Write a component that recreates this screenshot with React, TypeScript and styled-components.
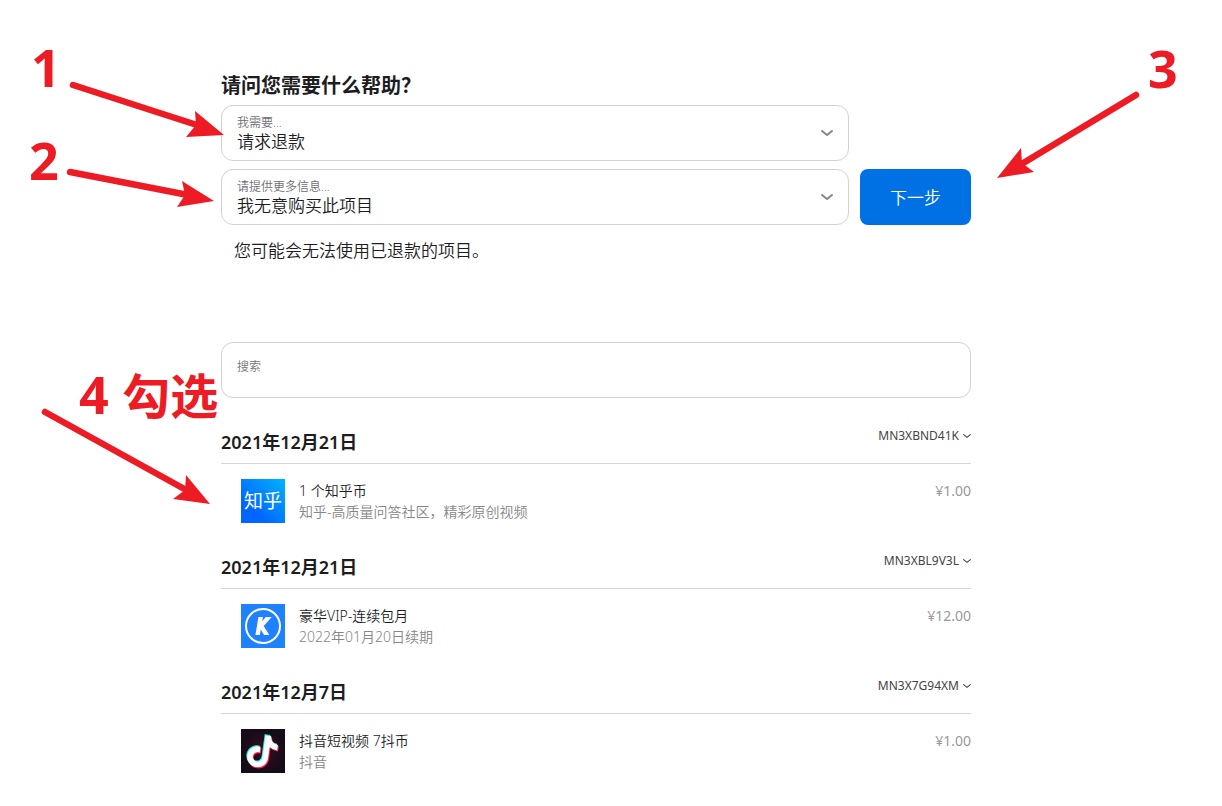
import React from "react";
import styled, { createGlobalStyle } from "styled-components";
import { FaTiktok } from "react-icons/fa6";

const GlobalStyle = createGlobalStyle`
  * { box-sizing: border-box; }
  body {
    margin: 0;
    background: #fff;
    color: #1d1d1f;
    font-family: "Noto Sans", "Noto Sans CJK SC", sans-serif;
    font-weight: 350;
    overflow-x: hidden;
  }
  button, input, select { font: inherit; color: inherit; }
`;

const Page = styled.main`
  padding-right: 30px;
`;

const Content = styled.div`
  position: relative;
  max-width: 750px;
  margin: 0 auto;
  padding-top: 74px;
`;

const Title = styled.h1`
  margin: 0 0 7px;
  font-size: 20px;
  line-height: 24px;
  font-weight: 700;
`;

const RequestForm = styled.form`
  display: grid;
  grid-template-columns: 1fr 111px;
  gap: 8px 11px;
`;

const Field = styled.div`
  display: grid;
  grid-column: 1;
  align-items: start;
  > * { grid-area: 1 / 1; }
`;

const FieldLabel = styled.label`
  padding: 9px 16px 0;
  font-size: 12px;
  line-height: 18px;
  color: #6e6e73;
  pointer-events: none;
  z-index: 1;
`;

const Select = styled.select`
  appearance: none;
  width: 100%;
  height: 56px;
  padding: 18px 40px 0 15px;
  border: 1px solid #d2d2d2;
  border-radius: 12px;
  background: #fff;
  font-size: 17px;
  line-height: 24px;
`;

const FieldArrow = styled.span`
  display: flex;
  align-self: center;
  justify-self: end;
  margin-right: 16px;
  color: #86868b;
  pointer-events: none;
  z-index: 1;
`;

const NextButton = styled.button`
  height: 56px;
  padding: 0 0 2px;
  border: 0;
  border-radius: 8px;
  background: #0071e5;
  color: #fff;
  font-size: 17px;
`;

const Note = styled.p`
  margin: 13px 0 79px;
  padding-left: 13px;
  font-size: 17px;
  line-height: 25px;
`;

const SearchInput = styled.input`
  display: block;
  width: 100%;
  height: 56px;
  margin-bottom: 30px;
  padding: 0 15px 8px;
  border: 1px solid #d2d2d2;
  border-radius: 12px;
  font-size: 12px;
  &::placeholder { color: #76767b; opacity: 1; }
`;

const Purchase = styled.section`
  padding-bottom: 30px;
`;

const PurchaseHeader = styled.header`
  display: flex;
  justify-content: space-between;
  align-items: flex-start;
  padding-bottom: 7px;
  border-bottom: 1px solid #d6d6d6;
`;

const PurchaseDate = styled.h2`
  margin: 0;
  font-size: 18px;
  line-height: 28px;
  font-weight: 600;
`;

const OrderButton = styled.button`
  display: flex;
  align-items: center;
  gap: 4px;
  padding: 0;
  border: 0;
  background: none;
  color: #444;
  font-size: 12px;
  font-weight: 400;
  line-height: 16px;
`;

const Item = styled.div`
  display: flex;
  gap: 14px;
  padding: 15px 0 0 20px;
`;

const ItemText = styled.div`
  flex: 1;
  font-size: 14px;
  line-height: 21px;
  padding-top: 1px;
`;

const ItemName = styled.div``;

const ItemDetail = styled.div`
  color: #868686;
`;

const Price = styled.div`
  padding-top: 1px;
  font-size: 14px;
  font-weight: 400;
  line-height: 21px;
  color: #999;
`;

const Markup = styled.div`
  position: absolute;
  top: 0;
  left: 0;
  color: #ed1c24;
  pointer-events: none;
`;

const Step = styled.span<{ $x: number; $y: number }>`
  position: absolute;
  left: ${(p) => p.$x}px;
  top: ${(p) => p.$y}px;
  font-size: 52px;
  line-height: 60px;
  font-weight: 700;
  white-space: nowrap;
`;

const StepWord = styled.span`
  font-size: 48px;
`;

const Arrows = styled.svg`
  position: absolute;
  top: 0;
  left: -221px;
`;

function Chevron({ width, stroke }: { width: number; stroke: number }) {
  return (
    <svg width={width} height={width / 2} viewBox="0 0 12 6" fill="none" stroke="currentColor" strokeWidth={stroke} strokeLinecap="round" strokeLinejoin="round">
      <path d="M1 1l5 4 5-4" />
    </svg>
  );
}

function ZhihuIcon() {
  return (
    <svg width="44" height="44" viewBox="0 0 44 44" role="img" aria-label="知乎">
      <defs>
        <linearGradient id="zhihu" x1="0.3" y1="0.75" x2="1" y2="0">
          <stop offset="0" stopColor="#0066ff" />
          <stop offset="1" stopColor="#00b4ff" />
        </linearGradient>
      </defs>
      <rect width="44" height="44" fill="url(#zhihu)" />
      <text x="22" y="29" textAnchor="middle" fontSize="19" fontWeight="400" fill="#fff">知乎</text>
    </svg>
  );
}

function KugouIcon() {
  return (
    <svg width="44" height="44" viewBox="0 0 44 44" role="img" aria-label="酷狗">
      <defs>
        <clipPath id="kugou">
          <rect x="10" y="13" width="24" height="18" />
        </clipPath>
      </defs>
      <rect width="44" height="44" fill="#1e82ff" />
      <circle cx="22" cy="22" r="17" fill="none" stroke="#fff" strokeWidth="2" />
      <g fill="none" stroke="#fff" strokeWidth="4.4" clipPath="url(#kugou)">
        <path d="M20 11L16.3 33" />
        <path d="M29.5 11L20 21.8L27 33" strokeLinejoin="bevel" />
      </g>
    </svg>
  );
}

function DouyinIcon() {
  return (
    <svg width="44" height="44" viewBox="0 0 44 44" role="img" aria-label="抖音">
      <defs>
        <radialGradient id="douyin">
          <stop offset="0" stopColor="#3a0c20" />
          <stop offset="1" stopColor="#160b18" />
        </radialGradient>
      </defs>
      <rect width="44" height="44" fill="url(#douyin)" />
      <g transform="rotate(8 22 22)">
        <FaTiktok x={4} y={5} size={33} color="#25f4ee" />
        <FaTiktok x={6} y={7} size={33} color="#fe2c55" />
        <FaTiktok x={5} y={6} size={33} color="#fff" />
      </g>
    </svg>
  );
}

const purchases = [
  { date: "2021年12月21日", order: "MN3XBND41K", icon: <ZhihuIcon />, name: "1 个知乎币", detail: "知乎-高质量问答社区，精彩原创视频", price: "¥1.00" },
  { date: "2021年12月21日", order: "MN3XBL9V3L", icon: <KugouIcon />, name: "豪华VIP-连续包月", detail: "2022年01月20日续期", price: "¥12.00" },
  { date: "2021年12月7日", order: "MN3X7G94XM", icon: <DouyinIcon />, name: "抖音短视频 7抖币", detail: "抖音", price: "¥1.00" },
];

const selects = [
  { id: "need", label: "我需要...", value: "请求退款" },
  { id: "reason", label: "请提供更多信息...", value: "我无意购买此项目" },
];

export default function App() {
  return (
    <Page>
      <GlobalStyle />
      <Content>
        <Title>请问您需要什么帮助？</Title>
        <RequestForm onSubmit={(e) => e.preventDefault()}>
          {selects.map((s) => (
            <Field key={s.id}>
              <FieldLabel htmlFor={s.id}>{s.label}</FieldLabel>
              <Select id={s.id}>
                <option>{s.value}</option>
              </Select>
              <FieldArrow>
                <Chevron width={12} stroke={2} />
              </FieldArrow>
            </Field>
          ))}
          <NextButton type="submit">下一步</NextButton>
        </RequestForm>
        <Note>您可能会无法使用已退款的项目。</Note>
        <SearchInput type="search" aria-label="搜索" placeholder="搜索" />
        {purchases.map((p) => (
          <Purchase key={p.order}>
            <PurchaseHeader>
              <PurchaseDate>{p.date}</PurchaseDate>
              <OrderButton type="button">
                {p.order}
                <Chevron width={8} stroke={1.6} />
              </OrderButton>
            </PurchaseHeader>
            <Item>
              {p.icon}
              <ItemText>
                <ItemName>{p.name}</ItemName>
                <ItemDetail>{p.detail}</ItemDetail>
              </ItemText>
              <Price>{p.price}</Price>
            </Item>
          </Purchase>
        ))}
        <Markup>
          <Step $x={-190} $y={37}>1</Step>
          <Step $x={-192} $y={130}>2</Step>
          <Step $x={927} $y={38}>3</Step>
          <Step $x={-142} $y={364}>4 <StepWord>勾选</StepWord></Step>
          <Arrows width="1222" height="540" viewBox="0 0 1222 540" fill="currentColor" stroke="currentColor" aria-hidden="true">
            <g strokeWidth="6.5" strokeLinecap="round">
              <path d="M73 85L200 126" />
              <path d="M70 172L188 195" />
              <path d="M1136 95L1020 165" />
              <path d="M45 412L188 491" />
            </g>
            <g stroke="none">
              <path d="M224 135L195 111L196 125L186 137Z" />
              <path d="M214 201L182 181L185 195L177 207Z" />
              <path d="M997 178L1021 148L1022 163L1034 172Z" />
              <path d="M210 504L186 475L185 490L173 499Z" />
            </g>
          </Arrows>
        </Markup>
      </Content>
    </Page>
  );
}
